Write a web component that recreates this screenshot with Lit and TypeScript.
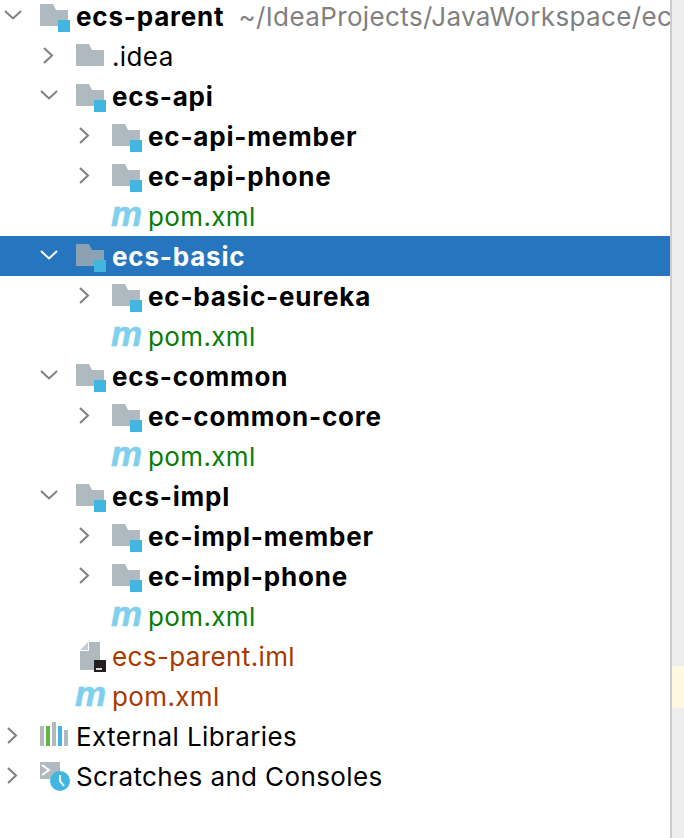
import { LitElement, html, css, svg } from 'lit';
import { customElement } from 'lit/decorators.js';

type Icon = 'module' | 'folder' | 'maven' | 'iml' | 'libs' | 'scratch';
type Row = {
  depth: number;
  open?: boolean;
  icon: Icon;
  label: string;
  tone?: 'bold' | 'plain' | 'green' | 'rust';
  hint?: string;
  selected?: boolean;
};

const rows: Row[] = [
  { depth: 0, open: true, icon: 'module', label: 'ecs-parent', tone: 'bold', hint: '~/IdeaProjects/JavaWorkspace/ecs' },
  { depth: 1, open: false, icon: 'folder', label: '.idea', tone: 'plain' },
  { depth: 1, open: true, icon: 'module', label: 'ecs-api', tone: 'bold' },
  { depth: 2, open: false, icon: 'module', label: 'ec-api-member', tone: 'bold' },
  { depth: 2, open: false, icon: 'module', label: 'ec-api-phone', tone: 'bold' },
  { depth: 2, icon: 'maven', label: 'pom.xml', tone: 'green' },
  { depth: 1, open: true, icon: 'module', label: 'ecs-basic', tone: 'bold', selected: true },
  { depth: 2, open: false, icon: 'module', label: 'ec-basic-eureka', tone: 'bold' },
  { depth: 2, icon: 'maven', label: 'pom.xml', tone: 'green' },
  { depth: 1, open: true, icon: 'module', label: 'ecs-common', tone: 'bold' },
  { depth: 2, open: false, icon: 'module', label: 'ec-common-core', tone: 'bold' },
  { depth: 2, icon: 'maven', label: 'pom.xml', tone: 'green' },
  { depth: 1, open: true, icon: 'module', label: 'ecs-impl', tone: 'bold' },
  { depth: 2, open: false, icon: 'module', label: 'ec-impl-member', tone: 'bold' },
  { depth: 2, open: false, icon: 'module', label: 'ec-impl-phone', tone: 'bold' },
  { depth: 2, icon: 'maven', label: 'pom.xml', tone: 'green' },
  { depth: 1, icon: 'iml', label: 'ecs-parent.iml', tone: 'rust' },
  { depth: 1, icon: 'maven', label: 'pom.xml', tone: 'rust' },
  { depth: 0, open: false, icon: 'libs', label: 'External Libraries', tone: 'plain' },
  { depth: 0, open: false, icon: 'scratch', label: 'Scratches and Consoles', tone: 'plain' },
];

const folderPath = 'M0 8H13L16 14H28V30H0Z';

function iconSvg(icon: Icon, selected: boolean) {
  const grey = selected ? '#8ba2b5' : '#aeb9c0';
  switch (icon) {
    case 'folder':
      return svg`<path d=${folderPath} fill=${grey} />`;
    case 'module':
      return svg`<path d=${folderPath} fill=${grey} /><rect x="18" y="24" width="12" height="12" fill="#40b6e0" />`;
    case 'iml':
      return svg`
        <path d="M13 6H24V34H4V15H13Z" fill="#aeb9c0" />
        <path d="M12 6V14H4Z" fill="#c6ced3" />
        <rect x="18" y="24" width="12" height="12" fill="#231f20" />
        <rect x="20" y="32" width="6" height="2" fill="#d9d9d9" />`;
    case 'libs':
      return svg`
        <rect x="0" y="10" width="4" height="20" fill="#aeb9c0" />
        <rect x="6" y="10" width="4" height="20" fill="#62b543" />
        <rect x="12" y="6" width="4" height="24" fill="#aeb9c0" />
        <rect x="18" y="10" width="4" height="20" fill="#40b6e0" />
        <rect x="24" y="14" width="4" height="16" fill="#aeb9c0" />`;
    case 'scratch':
      return svg`
        <rect x="0" y="6" width="20" height="17" fill="#aeb9c0" />
        <path d="M2 9L9 14L2 19" fill="none" stroke="#fff" stroke-width="2" />
        <circle cx="20" cy="25" r="10" fill="#40b6e0" />
        <path d="M20 19V25L24 30" fill="none" stroke="#fff" stroke-width="2" />`;
    default:
      return svg``;
  }
}

@customElement('app-root')
export class AppRoot extends LitElement {
  static styles = css`
    :host {
      display: flex;
      width: 684px;
      height: 838px;
      overflow: hidden;
      background: #fff;
      font-family: Inter, 'Liberation Sans', sans-serif;
      font-size: 26px;
    }
    .tree {
      flex: 1;
      min-width: 0;
      overflow: hidden;
      margin-top: -4px;
    }
    .gutter {
      width: 12px;
      border-left: 2px solid #cdcdcd;
      background: #eeeeee;
      padding-top: 666px;
      box-sizing: content-box;
    }
    .mark {
      height: 42px;
      background: #fff8e0;
    }
    .row {
      display: flex;
      align-items: center;
      height: 40px;
      white-space: nowrap;
      color: #000;
      letter-spacing: 0.38px;
    }
    .row.selected {
      background: #2675bf;
      color: #fff;
    }
    .row svg {
      flex: none;
      display: block;
    }
    .chevron {
      width: 40px;
      height: 40px;
      stroke: #7f7f7f;
      stroke-width: 2;
      fill: none;
    }
    .selected .chevron {
      stroke: #fff;
    }
    .icon {
      width: 36px;
      height: 40px;
    }
    .maven {
      flex: none;
      width: 36px;
      margin-left: -1px;
      margin-right: 1px;
      font-family: 'Liberation Sans', sans-serif;
      font-size: 35px;
      font-weight: bold;
      font-style: italic;
      line-height: 36px;
      height: 40px;
      letter-spacing: 0;
      color: #7fd0ee;
      -webkit-text-stroke: 0.6px #7fd0ee;
      user-select: none;
    }
    .label.bold {
      font-weight: 700;
      letter-spacing: 0.8px;
    }
    .label.plain {
      font-weight: 400;
    }
    .label.green {
      color: #087d08;
    }
    .label.rust {
      color: #a63a00;
    }
    .hint {
      margin-left: 14px;
      color: #808080;
    }
  `;

  renderChevron(open?: boolean) {
    if (open === undefined) return html`<svg class="chevron" viewBox="0 0 40 40"></svg>`;
    return html`<svg class="chevron" viewBox="0 0 40 40">
      ${open
        ? svg`<path d="M5 15L13 22.5L21 15" />`
        : svg`<path d="M8 12L16 19.5L8 27" />`}
    </svg>`;
  }

  renderRow(row: Row) {
    const selected = !!row.selected;
    return html`<div class="row ${selected ? 'selected' : ''}" style="padding-left:${row.depth * 36}px">
      ${this.renderChevron(row.open)}
      ${row.icon === 'maven'
        ? html`<span class="maven">m</span>`
        : html`<svg class="icon" viewBox="0 0 36 40">${iconSvg(row.icon, selected)}</svg>`}
      <span class="label ${row.tone}">${row.label}</span>
      ${row.hint ? html`<span class="hint">${row.hint}</span>` : ''}
    </div>`;
  }

  render() {
    return html`
      <div class="tree">${rows.map((r) => this.renderRow(r))}</div>
      <div class="gutter"><div class="mark"></div></div>
    `;
  }
}
